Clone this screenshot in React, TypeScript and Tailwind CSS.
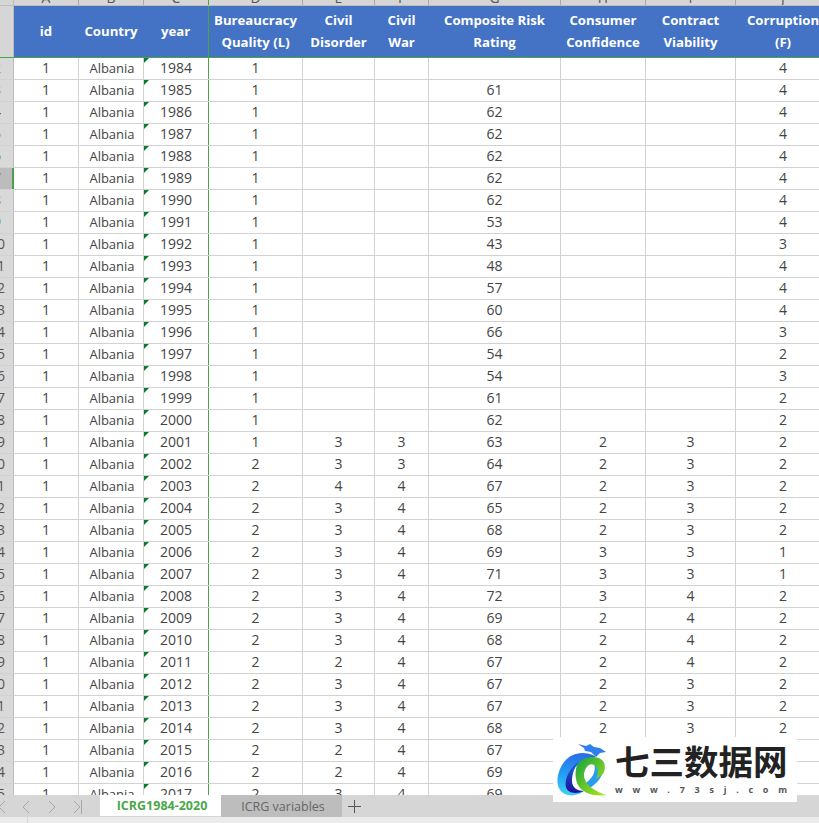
const font = "[font-family:'Open_Sans','Noto_Sans',sans-serif]";

// column classes: width includes the right gridline
const colA = "w-[65px]";
const colB = "w-[65px]";
const colC = "w-[65px]";
const colD = "w-[94px]";
const colE = "w-[72px]";
const colF = "w-[54px]";
const colG = "w-[132px]";
const colH = "w-[85px]";
const colI = "w-[90px]";
const colJ = "w-[95px]";

const letters = [
  { l: "A", c: colA },
  { l: "B", c: colB },
  { l: "C", c: colC },
  { l: "D", c: colD },
  { l: "E", c: colE },
  { l: "F", c: colF },
  { l: "G", c: colG },
  { l: "H", c: colH },
  { l: "I", c: colI },
  { l: "J", c: colJ },
];

const headers = [
  { lines: ["id"], c: colA },
  { lines: ["Country"], c: colB },
  { lines: ["year"], c: colC },
  { lines: ["Bureaucracy", "Quality (L)"], c: colD },
  { lines: ["Civil", "Disorder"], c: colE },
  { lines: ["Civil", "War"], c: colF },
  { lines: ["Composite Risk", "Rating"], c: colG },
  { lines: ["Consumer", "Confidence"], c: colH },
  { lines: ["Contract", "Viability"], c: colI },
  { lines: ["Corruption", "(F)"], c: colJ },
];

// year, bureaucracy, disorder, war, composite, consumer, contract, corruption
const rows: (string | number)[][] = [
  [1984, 1, "", "", "", "", "", 4],
  [1985, 1, "", "", 61, "", "", 4],
  [1986, 1, "", "", 62, "", "", 4],
  [1987, 1, "", "", 62, "", "", 4],
  [1988, 1, "", "", 62, "", "", 4],
  [1989, 1, "", "", 62, "", "", 4],
  [1990, 1, "", "", 62, "", "", 4],
  [1991, 1, "", "", 53, "", "", 4],
  [1992, 1, "", "", 43, "", "", 3],
  [1993, 1, "", "", 48, "", "", 4],
  [1994, 1, "", "", 57, "", "", 4],
  [1995, 1, "", "", 60, "", "", 4],
  [1996, 1, "", "", 66, "", "", 3],
  [1997, 1, "", "", 54, "", "", 2],
  [1998, 1, "", "", 54, "", "", 3],
  [1999, 1, "", "", 61, "", "", 2],
  [2000, 1, "", "", 62, "", "", 2],
  [2001, 1, 3, 3, 63, 2, 3, 2],
  [2002, 2, 3, 3, 64, 2, 3, 2],
  [2003, 2, 4, 4, 67, 2, 3, 2],
  [2004, 2, 3, 4, 65, 2, 3, 2],
  [2005, 2, 3, 4, 68, 2, 3, 2],
  [2006, 2, 3, 4, 69, 3, 3, 1],
  [2007, 2, 3, 4, 71, 3, 3, 1],
  [2008, 2, 3, 4, 72, 3, 4, 2],
  [2009, 2, 3, 4, 69, 2, 4, 2],
  [2010, 2, 3, 4, 68, 2, 4, 2],
  [2011, 2, 2, 4, 67, 2, 4, 2],
  [2012, 2, 3, 4, 67, 2, 3, 2],
  [2013, 2, 3, 4, 67, 2, 3, 2],
  [2014, 2, 3, 4, 68, 2, 3, 2],
  [2015, 2, 2, 4, 67, 2, 3, 2],
  [2016, 2, 2, 4, 69, 2, 3, 2],
  [2017, 2, 3, 4, 69, 2, 3, 2],
];

const cell =
  "shrink-0 h-full flex items-center justify-center pb-[2px] border-r border-[#d2d2d2]";

function Logo() {
  return (
    <div className="absolute left-[553px] top-[737px] w-[244px] h-[65px] bg-white flex items-start pl-[4px] pt-[6px]">
      <svg width="50" height="53" viewBox="0 0 50 53" className="shrink-0">
        <defs>
          <linearGradient id="outer" x1="0.4" y1="0" x2="0.2" y2="1">
            <stop offset="0" stopColor="#2a6fe8" />
            <stop offset="0.55" stopColor="#259ff5" />
            <stop offset="1" stopColor="#3fd4f2" />
          </linearGradient>
          <linearGradient id="inner" x1="0.6" y1="0" x2="0.5" y2="1">
            <stop offset="0" stopColor="#1b6ad8" />
            <stop offset="1" stopColor="#20129a" />
          </linearGradient>
          <linearGradient id="green" x1="0" y1="0" x2="1" y2="1">
            <stop offset="0" stopColor="#12a040" />
            <stop offset="1" stopColor="#b4ea18" />
          </linearGradient>
        </defs>
        <path
          d="M38 13 C26 7 12 10 5 22 C-2 34 -1 47 8 51 C14 54 22 52 27 48 C20 49 14 46 13 39 C12 28 22 16 38 17 Z"
          fill="url(#outer)"
        />
        <path
          d="M27 5 L21 1 L29 3 L33 1 L37 4 L43 5 L49 9 L43 10 L39 14 L34 9 L28 8 Z"
          fill="#2f80ea"
        />
        <path
          d="M22 18 C13 25 7 36 9 44 C11 51 20 51 27 48 C21 48 15 45 15 38 C15 30 18 24 22 18 Z"
          fill="url(#inner)"
        />
        <path
          d="M37 20 C43 20 47 24 46 29 C44 36 38 42 31 46 L28 41 C34 36 40 30 37 20 Z"
          fill="#2a9cf0"
        />
        <path
          d="M20 22 C25 14 40 11 46 18 C49 22 48 28 46 31 L39 36 C42 30 41 24 37 22 C32 19 27 26 27 32 C27 41 38 49 50 52 C36 54 24 50 20 40 C18 34 18 28 20 22 Z"
          fill="url(#green)"
        />
      </svg>
      <div className="ml-[8px] w-[172px] flex flex-col">
        <div className="h-[34px] text-[34.5px] leading-[34px] font-bold text-[#222] whitespace-nowrap [font-family:'Noto_Sans_CJK_SC',sans-serif]">
          七三数据网
        </div>
        <div className="mt-[8px] flex justify-between text-[9px] leading-[10px] font-bold text-[#555] [font-family:'Open_Sans',sans-serif]">
          {"www.73sj.com".split("").map((ch, i) => (
            <span key={i}>{ch}</span>
          ))}
        </div>
      </div>
    </div>
  );
}

export default function App() {
  return (
    <div className={`relative w-[819px] h-[823px] overflow-hidden bg-white ${font}`}>
      <div className="h-[795px] overflow-hidden flex flex-col">
        {/* column letters, scrolled so only the lower part shows */}
        <div className="h-[6px] shrink-0 flex bg-[#d6d6d6] border-b border-[#bdbdbd] overflow-hidden">
          <div className="w-[14px] shrink-0 border-r border-[#bdbdbd]" />
          {letters.map((h) => (
            <div
              key={h.l}
              className={`${h.c} shrink-0 h-full relative border-r overflow-hidden ${
                h.l === "C" ? "border-[#4aa24a]" : "border-[#a8a8a8]"
              }`}
            >
              <span className="absolute inset-x-0 bottom-0 text-center text-[14px] leading-[14px] text-[#555]">
                {h.l}
              </span>
            </div>
          ))}
        </div>

        {/* header row */}
        <div className="h-[52px] shrink-0 flex border-b border-[#4aa24a]">
          <div className="w-[14px] shrink-0 bg-[#d6d6d6] border-r border-[#bdbdbd]" />
          {headers.map((h, i) => (
            <div
              key={i}
              className={`${h.c} shrink-0 h-full flex flex-col items-center justify-center pb-[2px] pr-[1px] bg-[#4472c4] text-white font-bold text-[13.2px] leading-[22px] whitespace-nowrap overflow-hidden ${
                i === 2 ? "border-r border-[#4aa24a]" : ""
              }`}
            >
              {h.lines.map((line) => (
                <span key={line}>{line}</span>
              ))}
            </div>
          ))}
        </div>

        {rows.map((r, i) => (
          <div
            key={r[0]}
            className="h-[22px] shrink-0 flex border-b border-[#d2d2d2] text-[14px] text-[#444]"
          >
            <div
              className={`w-[14px] shrink-0 h-full border-r overflow-hidden text-[14px] text-[#555] ${
                r[0] === 1989
                  ? "bg-[#bcbcbc] border-r-[2px] border-[#4aa24a]"
                  : "bg-[#d9d9d9] border-[#bdbdbd]"
              }`}
            >
              {/* row numbers are centred in a header that is scrolled off to the left */}
              <div className="-ml-[23px] w-[40px] h-full flex items-center justify-center pb-[2px]">
                {i + 2}
              </div>
            </div>
            <div className={`${colA} ${cell}`}>1</div>
            <div className={`${colB} h-full shrink-0 flex items-center justify-center pl-[2px] border-r border-[#d2d2d2] text-[13px]`}>
              Albania
            </div>
            <div className={`${colC} ${cell} relative border-r-[#4aa24a]`}>
              <span className="absolute left-0 top-0 w-0 h-0 border-t-[5px] border-r-[5px] border-t-[#0b7a2a] border-r-transparent" />
              {r[0]}
            </div>
            <div className={`${colD} ${cell}`}>{r[1]}</div>
            <div className={`${colE} ${cell}`}>{r[2]}</div>
            <div className={`${colF} ${cell}`}>{r[3]}</div>
            <div className={`${colG} ${cell}`}>{r[4]}</div>
            <div className={`${colH} ${cell}`}>{r[5]}</div>
            <div className={`${colI} ${cell}`}>{r[6]}</div>
            <div className={`${colJ} ${cell}`}>{r[7]}</div>
          </div>
        ))}
      </div>

      {/* sheet tabs */}
      <div className="h-[22px] flex bg-[#d6d6d6] text-[12.5px]">
        <div className="w-[100px] shrink-0 flex items-center pt-[1px] text-[#a8a8a8]">
          <svg width="84" height="14" viewBox="0 0 84 14" fill="none" stroke="currentColor" strokeWidth="1">
            <path d="M5 1 L-1 7 L5 13" />
            <path d="M29 1 L23 7 L29 13" />
            <path d="M49 1 L55 7 L49 13" />
            <path d="M74 1 L80 7 L74 13" />
            <path d="M81.5 0 L81.5 14" />
          </svg>
        </div>
        <div className="w-[121px] shrink-0 h-[21px] bg-white flex items-center justify-center pt-[2px] pl-[3px] font-bold text-[#4aa84a]">
          ICRG1984-2020
        </div>
        <div className="w-[121px] shrink-0 h-full bg-[#bdbdbd] flex items-center justify-center pt-[2px] pl-[3px] text-[#666]">
          ICRG variables
        </div>
        <div className="ml-[5px] w-[14px] h-full flex items-center justify-center pt-[1px]">
          <svg width="13" height="13" viewBox="0 0 13 13" stroke="#555" strokeWidth="1">
            <path d="M0 6.5 H13 M6.5 0 V13" />
          </svg>
        </div>
      </div>
      <div className="h-[6px] bg-[#ebebeb] flex">
        <div className="w-[28px] border-r border-[#d6d6d6]" />
      </div>

      <Logo />
    </div>
  );
}
